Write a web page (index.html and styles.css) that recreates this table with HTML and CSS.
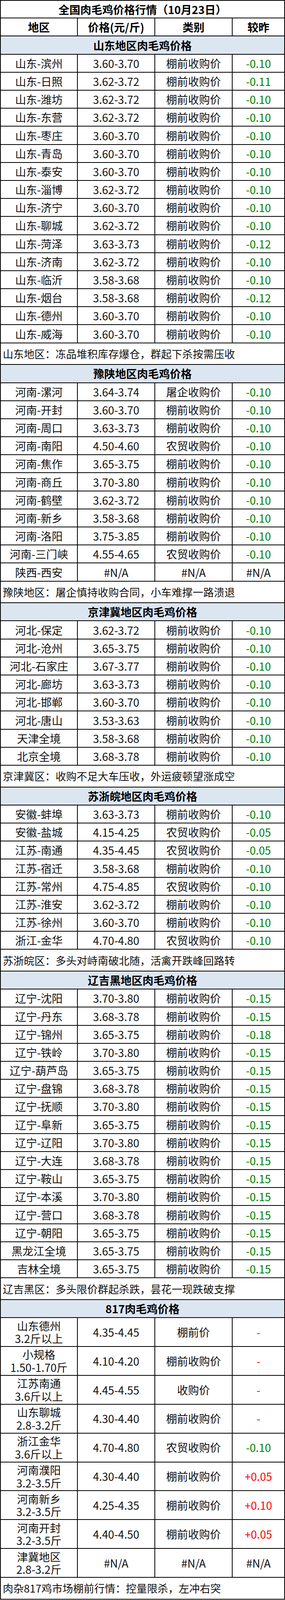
FILE: index.html
```html
<!DOCTYPE html>
<html lang="zh-CN">
<head>
<meta charset="utf-8">
<title>全国肉毛鸡价格行情（10月23日）</title>
<link rel="stylesheet" href="styles.css">
</head>
<body>
<div class="sheet">
  <div class="cell title full">全国肉毛鸡价格行情（10月23日）</div>

  <div class="cell head">地区</div><div class="cell head">价格(元/斤)</div><div class="cell head">类别</div><div class="cell head">较昨</div>

  <div class="cell section full">山东地区肉毛鸡价格</div>
  <div class="cell">山东-滨州</div><div class="cell">3.60-3.70</div><div class="cell">棚前收购价</div><div class="cell down">-0.10</div>
  <div class="cell">山东-日照</div><div class="cell">3.62-3.72</div><div class="cell">棚前收购价</div><div class="cell down">-0.11</div>
  <div class="cell">山东-潍坊</div><div class="cell">3.62-3.72</div><div class="cell">棚前收购价</div><div class="cell down">-0.10</div>
  <div class="cell">山东-东营</div><div class="cell">3.62-3.72</div><div class="cell">棚前收购价</div><div class="cell down">-0.10</div>
  <div class="cell">山东-枣庄</div><div class="cell">3.60-3.70</div><div class="cell">棚前收购价</div><div class="cell down">-0.10</div>
  <div class="cell">山东-青岛</div><div class="cell">3.60-3.70</div><div class="cell">棚前收购价</div><div class="cell down">-0.10</div>
  <div class="cell">山东-泰安</div><div class="cell">3.60-3.70</div><div class="cell">棚前收购价</div><div class="cell down">-0.10</div>
  <div class="cell">山东-淄博</div><div class="cell">3.62-3.72</div><div class="cell">棚前收购价</div><div class="cell down">-0.10</div>
  <div class="cell">山东-济宁</div><div class="cell">3.60-3.70</div><div class="cell">棚前收购价</div><div class="cell down">-0.10</div>
  <div class="cell">山东-聊城</div><div class="cell">3.62-3.72</div><div class="cell">棚前收购价</div><div class="cell down">-0.10</div>
  <div class="cell">山东-菏泽</div><div class="cell">3.63-3.73</div><div class="cell">棚前收购价</div><div class="cell down">-0.12</div>
  <div class="cell">山东-济南</div><div class="cell">3.62-3.72</div><div class="cell">棚前收购价</div><div class="cell down">-0.10</div>
  <div class="cell">山东-临沂</div><div class="cell">3.58-3.68</div><div class="cell">棚前收购价</div><div class="cell down">-0.10</div>
  <div class="cell">山东-烟台</div><div class="cell">3.58-3.68</div><div class="cell">棚前收购价</div><div class="cell down">-0.12</div>
  <div class="cell">山东-德州</div><div class="cell">3.60-3.70</div><div class="cell">棚前收购价</div><div class="cell down">-0.10</div>
  <div class="cell">山东-威海</div><div class="cell">3.60-3.70</div><div class="cell">棚前收购价</div><div class="cell down">-0.10</div>
  <div class="cell note full">山东地区：冻品堆积库存爆仓，群起下杀按需压收</div>

  <div class="cell section full">豫陕地区肉毛鸡价格</div>
  <div class="cell">河南-漯河</div><div class="cell">3.64-3.74</div><div class="cell">屠企收购价</div><div class="cell down">-0.10</div>
  <div class="cell">河南-开封</div><div class="cell">3.60-3.70</div><div class="cell">棚前收购价</div><div class="cell down">-0.10</div>
  <div class="cell">河南-周口</div><div class="cell">3.63-3.73</div><div class="cell">棚前收购价</div><div class="cell down">-0.10</div>
  <div class="cell">河南-南阳</div><div class="cell">4.50-4.60</div><div class="cell">农贸收购价</div><div class="cell down">-0.10</div>
  <div class="cell">河南-焦作</div><div class="cell">3.65-3.75</div><div class="cell">棚前收购价</div><div class="cell down">-0.10</div>
  <div class="cell">河南-商丘</div><div class="cell">3.70-3.80</div><div class="cell">棚前收购价</div><div class="cell down">-0.10</div>
  <div class="cell">河南-鹤壁</div><div class="cell">3.62-3.72</div><div class="cell">棚前收购价</div><div class="cell down">-0.10</div>
  <div class="cell">河南-新乡</div><div class="cell">3.58-3.68</div><div class="cell">棚前收购价</div><div class="cell down">-0.10</div>
  <div class="cell">河南-洛阳</div><div class="cell">3.75-3.85</div><div class="cell">棚前收购价</div><div class="cell down">-0.10</div>
  <div class="cell">河南-三门峡</div><div class="cell">4.55-4.65</div><div class="cell">农贸收购价</div><div class="cell down">-0.10</div>
  <div class="cell">陕西-西安</div><div class="cell">#N/A</div><div class="cell">#N/A</div><div class="cell">#N/A</div>
  <div class="cell note full">豫陕地区：屠企慎持收购合同，小车难撑一路溃退</div>

  <div class="cell section full">京津冀地区肉毛鸡价格</div>
  <div class="cell">河北-保定</div><div class="cell">3.62-3.72</div><div class="cell">棚前收购价</div><div class="cell down">-0.10</div>
  <div class="cell">河北-沧州</div><div class="cell">3.65-3.75</div><div class="cell">棚前收购价</div><div class="cell down">-0.10</div>
  <div class="cell">河北-石家庄</div><div class="cell">3.67-3.77</div><div class="cell">棚前收购价</div><div class="cell down">-0.10</div>
  <div class="cell">河北-廊坊</div><div class="cell">3.63-3.73</div><div class="cell">棚前收购价</div><div class="cell down">-0.10</div>
  <div class="cell">河北-邯郸</div><div class="cell">3.60-3.70</div><div class="cell">棚前收购价</div><div class="cell down">-0.10</div>
  <div class="cell">河北-唐山</div><div class="cell">3.53-3.63</div><div class="cell">棚前收购价</div><div class="cell down">-0.10</div>
  <div class="cell">天津全境</div><div class="cell">3.58-3.68</div><div class="cell">棚前收购价</div><div class="cell down">-0.10</div>
  <div class="cell">北京全境</div><div class="cell">3.68-3.78</div><div class="cell">棚前收购价</div><div class="cell down">-0.10</div>
  <div class="cell note full">京津冀区：收购不足大车压收，外运疲顿望涨成空</div>

  <div class="cell section full">苏浙皖地区肉毛鸡价格</div>
  <div class="cell">安徽-蚌埠</div><div class="cell">3.63-3.73</div><div class="cell">棚前收购价</div><div class="cell down">-0.10</div>
  <div class="cell">安徽-盐城</div><div class="cell">4.15-4.25</div><div class="cell">农贸收购价</div><div class="cell down">-0.05</div>
  <div class="cell">江苏-南通</div><div class="cell">4.35-4.45</div><div class="cell">农贸收购价</div><div class="cell down">-0.05</div>
  <div class="cell">江苏-宿迁</div><div class="cell">3.58-3.68</div><div class="cell">棚前收购价</div><div class="cell down">-0.10</div>
  <div class="cell">江苏-常州</div><div class="cell">4.75-4.85</div><div class="cell">农贸收购价</div><div class="cell down">-0.10</div>
  <div class="cell">江苏-淮安</div><div class="cell">3.62-3.72</div><div class="cell">棚前收购价</div><div class="cell down">-0.10</div>
  <div class="cell">江苏-徐州</div><div class="cell">3.60-3.70</div><div class="cell">棚前收购价</div><div class="cell down">-0.10</div>
  <div class="cell">浙江-金华</div><div class="cell">4.70-4.80</div><div class="cell">农贸收购价</div><div class="cell down">-0.10</div>
  <div class="cell note full">苏浙皖区：多头对峙南破北随，活禽开跌峰回路转</div>

  <div class="cell section full">辽吉黑地区肉毛鸡价格</div>
  <div class="cell">辽宁-沈阳</div><div class="cell">3.70-3.80</div><div class="cell">棚前收购价</div><div class="cell down">-0.15</div>
  <div class="cell">辽宁-丹东</div><div class="cell">3.68-3.78</div><div class="cell">棚前收购价</div><div class="cell down">-0.15</div>
  <div class="cell">辽宁-锦州</div><div class="cell">3.65-3.75</div><div class="cell">棚前收购价</div><div class="cell down">-0.18</div>
  <div class="cell">辽宁-铁岭</div><div class="cell">3.70-3.80</div><div class="cell">棚前收购价</div><div class="cell down">-0.15</div>
  <div class="cell">辽宁-葫芦岛</div><div class="cell">3.65-3.75</div><div class="cell">棚前收购价</div><div class="cell down">-0.15</div>
  <div class="cell">辽宁-盘锦</div><div class="cell">3.68-3.78</div><div class="cell">棚前收购价</div><div class="cell down">-0.15</div>
  <div class="cell">辽宁-抚顺</div><div class="cell">3.70-3.80</div><div class="cell">棚前收购价</div><div class="cell down">-0.15</div>
  <div class="cell">辽宁-阜新</div><div class="cell">3.65-3.75</div><div class="cell">棚前收购价</div><div class="cell down">-0.15</div>
  <div class="cell">辽宁-辽阳</div><div class="cell">3.70-3.80</div><div class="cell">棚前收购价</div><div class="cell down">-0.15</div>
  <div class="cell">辽宁-大连</div><div class="cell">3.68-3.78</div><div class="cell">棚前收购价</div><div class="cell down">-0.15</div>
  <div class="cell">辽宁-鞍山</div><div class="cell">3.65-3.75</div><div class="cell">棚前收购价</div><div class="cell down">-0.15</div>
  <div class="cell">辽宁-本溪</div><div class="cell">3.70-3.80</div><div class="cell">棚前收购价</div><div class="cell down">-0.15</div>
  <div class="cell">辽宁-营口</div><div class="cell">3.68-3.78</div><div class="cell">棚前收购价</div><div class="cell down">-0.15</div>
  <div class="cell">辽宁-朝阳</div><div class="cell">3.65-3.75</div><div class="cell">棚前收购价</div><div class="cell down">-0.15</div>
  <div class="cell">黑龙江全境</div><div class="cell">3.65-3.75</div><div class="cell">棚前收购价</div><div class="cell down">-0.15</div>
  <div class="cell">吉林全境</div><div class="cell">3.65-3.75</div><div class="cell">棚前收购价</div><div class="cell down">-0.15</div>
  <div class="cell note full">辽吉黑区：多头限价群起杀跌，昙花一现跌破支撑</div>

  <div class="cell section full">817肉毛鸡价格</div>
  <div class="cell tall">山东德州<br>3.2斤以上</div><div class="cell tall">4.35-4.45</div><div class="cell tall">棚前价</div><div class="cell tall up">-</div>
  <div class="cell tall">小规格<br>1.50-1.70斤</div><div class="cell tall">4.10-4.20</div><div class="cell tall">棚前收购价</div><div class="cell tall up">-</div>
  <div class="cell tall">江苏南通<br>3.6斤以上</div><div class="cell tall">4.45-4.55</div><div class="cell tall">收购价</div><div class="cell tall up">-</div>
  <div class="cell tall">山东聊城<br>2.8-3.2斤</div><div class="cell tall">4.30-4.40</div><div class="cell tall">棚前收购价</div><div class="cell tall up">-</div>
  <div class="cell tall">浙江金华<br>3.6斤以上</div><div class="cell tall">4.70-4.80</div><div class="cell tall">农贸收购价</div><div class="cell tall down">-0.10</div>
  <div class="cell tall">河南濮阳<br>3.2-3.5斤</div><div class="cell tall">4.30-4.40</div><div class="cell tall">棚前收购价</div><div class="cell tall up">+0.05</div>
  <div class="cell tall">河南新乡<br>3.2-3.5斤</div><div class="cell tall">4.25-4.35</div><div class="cell tall">棚前收购价</div><div class="cell tall up">+0.10</div>
  <div class="cell tall">河南开封<br>3.2-3.5斤</div><div class="cell tall">4.40-4.50</div><div class="cell tall">棚前收购价</div><div class="cell tall up">+0.05</div>
  <div class="cell tall">津冀地区<br>2.8-3.2斤</div><div class="cell tall">#N/A</div><div class="cell tall">#N/A</div><div class="cell tall">#N/A</div>
  <div class="cell note full">肉杂817鸡市场棚前行情：控量限杀，左冲右突</div>
</div>
</body>
</html>
```

FILE: styles.css
```css
html, body {
  margin: 0;
  padding: 0;
  background: #ffffff;
}

body {
  width: 729px;
  font-family: "Noto Sans CJK SC", "Noto Sans", sans-serif;
  color: #111111;
}

.sheet {
  display: grid;
  grid-template-columns: 195px 196px 196px 132px;
  gap: 2px;
  padding: 2px;
  background: #000000;
  width: 729px;
  box-sizing: border-box;
}

.cell {
  background: #ffffff;
  height: 44.2px;
  display: flex;
  align-items: center;
  justify-content: center;
  text-align: center;
  font-size: 28px;
  line-height: 1;
  white-space: nowrap;
}

.full {
  grid-column: 1 / -1;
}

.title {
  height: 43.3px;
  font-weight: 700;
  color: #000000;
}

.head {
  font-weight: 700;
  color: #000000;
}

.section {
  background: #dce6f1;
  font-weight: 700;
  color: #000000;
}

.note {
  height: 53.7px;
  justify-content: flex-start;
  padding-left: 5px;
  font-size: 27px;
}

.tall {
  height: 71.9px;
  line-height: 32.5px;
}

.down {
  color: #008000;
}

.up {
  color: #ff0000;
}
```
